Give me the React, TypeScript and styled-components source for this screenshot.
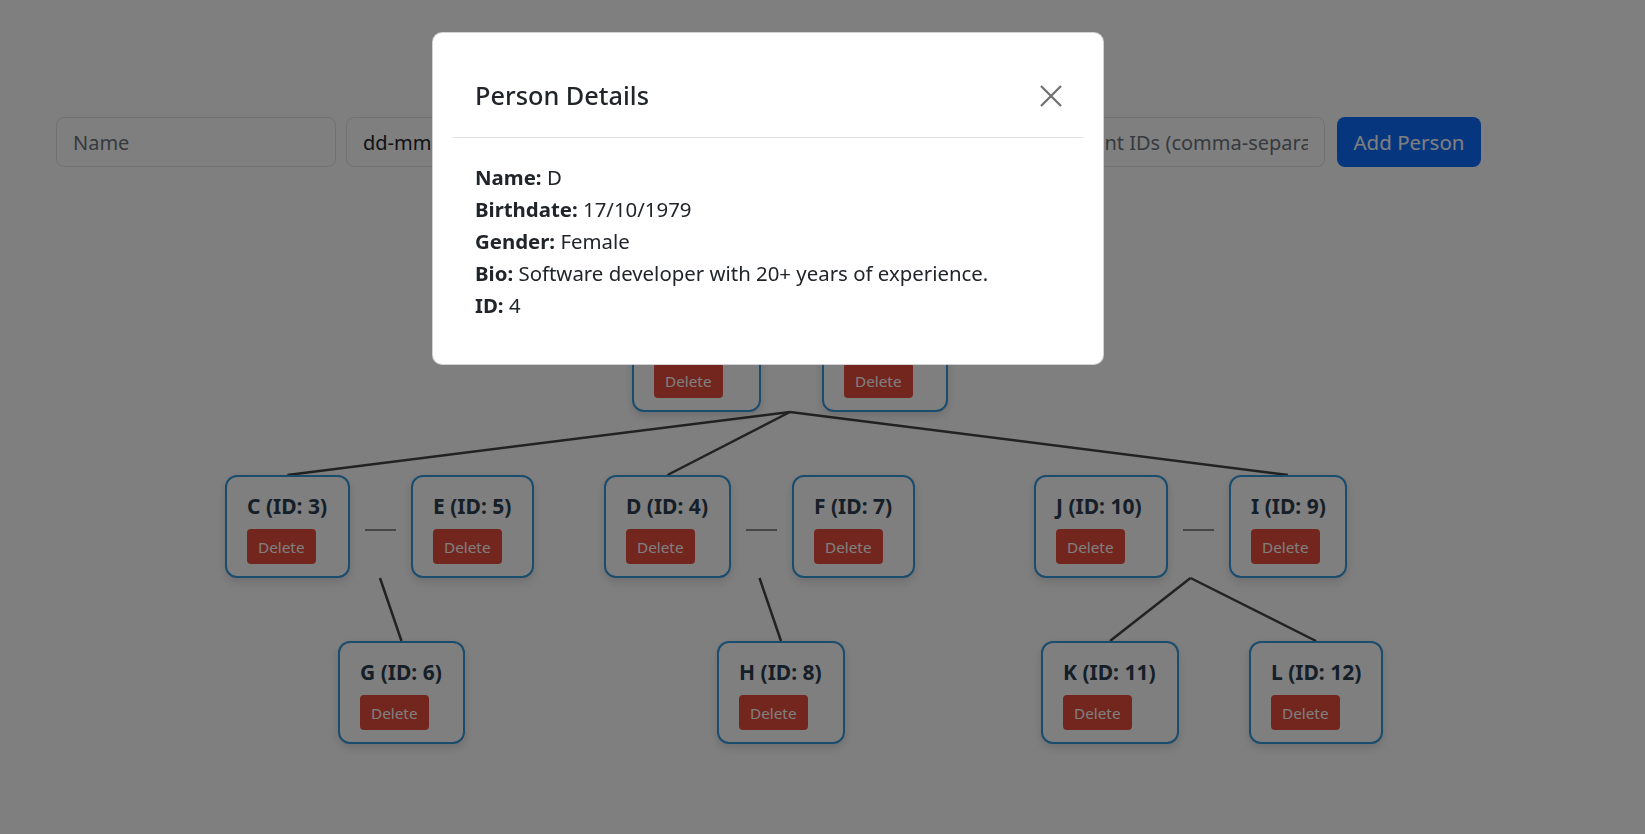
import React from "react";
import styled, { createGlobalStyle } from "styled-components";

const GlobalStyle = createGlobalStyle`
  html, body { margin: 0; padding: 0; background: #ffffff; }
  body { font-family: "Noto Sans", "Open Sans", sans-serif; color: #212529; }
  *, *::before, *::after { box-sizing: border-box; }
`;

const Page = styled.div`
  min-height: 834px;
  padding-top: 117px;
`;

const Form = styled.form`
  display: flex;
  gap: 10px;
  padding-left: 56px;
`;

const Field = styled.input<{ $w: number; $dark?: boolean }>`
  width: ${(p) => p.$w}px;
  height: 50px;
  padding: 0 16px;
  font: 400 20px/1.5 "Noto Sans", sans-serif;
  color: #212529;
  background: #fff;
  border: 1px solid #dee2e6;
  border-radius: 8px;
  outline: none;
  &::placeholder {
    color: ${(p) => (p.$dark ? "#212529" : "#6c757d")};
  }
`;

const Select = styled.select<{ $w: number }>`
  width: ${(p) => p.$w}px;
  height: 50px;
  padding: 0 16px;
  font: 400 20px/1.5 "Noto Sans", sans-serif;
  color: #212529;
  background: #fff;
  border: 1px solid #dee2e6;
  border-radius: 8px;
`;

const AddButton = styled.button`
  width: 144px;
  height: 50px;
  margin-left: 2px;
  font: 400 20.5px/1.5 "Noto Sans", sans-serif;
  color: #fff;
  background: #0d6efd;
  border: none;
  border-radius: 8px;
`;

const Canvas = styled.div`
  position: relative;
  margin-top: 33px;
  height: 600px;
`;

const Lines = styled.svg`
  position: absolute;
  left: 0;
  top: 0;
  width: 100%;
  height: 100%;
  pointer-events: none;
`;

const Group = styled.div`
  position: absolute;
  display: flex;
  align-items: center;
`;

const Card = styled.div`
  height: 103px;
  padding: 17px 0 0 20px;
  background: #fff;
  border: 2px solid #3498db;
  border-radius: 12px;
  box-shadow: 0 4px 10px rgba(0, 0, 0, 0.14);
`;

const CardTitle = styled.div`
  margin-bottom: 11px;
  font: 700 21px/24px "Noto Sans", sans-serif;
  color: #2c3e50;
  white-space: nowrap;
`;

const DeleteButton = styled.button`
  height: 35px;
  padding: 0 11px;
  font: 400 15.3px/24px "Noto Sans", sans-serif;
  color: #fff;
  background: #e74c3c;
  border: none;
  border-radius: 4px;
`;

const SpouseLink = styled.span`
  width: 31px;
  height: 2px;
  margin: 7px 15px 0;
  background: #8c8c8c;
`;

const Overlay = styled.div`
  position: fixed;
  inset: 0;
  background: rgba(0, 0, 0, 0.5);
`;

const Dialog = styled.div`
  width: 672px;
  margin: 32px 0 0 432px;
  padding: 0 20px;
  background: #fff;
  border: 1px solid rgba(0, 0, 0, 0.175);
  border-radius: 10px;
`;

const DialogHeader = styled.div`
  display: flex;
  align-items: center;
  justify-content: space-between;
  padding: 43px 21px 22px 22px;
  border-bottom: 1px solid #dee2e6;
`;

const DialogTitle = styled.h5`
  margin: 0;
  font: 500 25.3px/39px "Noto Sans", sans-serif;
  color: #212529;
`;

const CloseButton = styled.button`
  display: flex;
  padding: 0;
  background: none;
  border: none;
`;

const DialogBody = styled.div`
  padding: 23px 22px 43px;
  font: 400 20.4px/32px "Noto Sans", sans-serif;
  color: #212529;
`;

const Line = styled.div`
  white-space: nowrap;
`;

type Person = { name: string; id: number; w: number };

const NodeCard = ({ p }: { p: Person }) => (
  <Card style={{ width: p.w }}>
    <CardTitle>
      {p.name} (ID: {p.id})
    </CardTitle>
    <DeleteButton>Delete</DeleteButton>
  </Card>
);

const TOP = 200;
const rows = [309 - TOP, 475 - TOP, 641 - TOP];

const couples: { x: number; y: number; a: Person; b: Person }[] = [
  { x: 632, y: rows[0], a: { name: "A", id: 1, w: 129 }, b: { name: "B", id: 2, w: 126 } },
  { x: 225, y: rows[1], a: { name: "C", id: 3, w: 125 }, b: { name: "E", id: 5, w: 123 } },
  { x: 604, y: rows[1], a: { name: "D", id: 4, w: 127 }, b: { name: "F", id: 7, w: 123 } },
  { x: 1034, y: rows[1], a: { name: "J", id: 10, w: 134 }, b: { name: "I", id: 9, w: 118 } },
];

const singles: { x: number; y: number; p: Person }[] = [
  { x: 338, y: rows[2], p: { name: "G", id: 6, w: 127 } },
  { x: 717, y: rows[2], p: { name: "H", id: 8, w: 128 } },
  { x: 1041, y: rows[2], p: { name: "K", id: 11, w: 138 } },
  { x: 1249, y: rows[2], p: { name: "L", id: 12, w: 134 } },
];

const edges: [number, number, number, number][] = [
  [790, 412, 287.5, 475],
  [790, 412, 667.5, 475],
  [790, 412, 1288, 475],
  [380, 578, 401.5, 641],
  [759.5, 578, 781, 641],
  [1190.5, 578, 1110, 641],
  [1190.5, 578, 1316, 641],
];

const CloseIcon = () => (
  <svg width="22" height="22" viewBox="0 0 22 22">
    <path d="M1 1 L21 21 M21 1 L1 21" stroke="#6f6f6f" strokeWidth="2.2" fill="none" />
  </svg>
);

export default function App() {
  return (
    <>
      <GlobalStyle />
      <Page>
        <Form onSubmit={(e) => e.preventDefault()}>
          <Field $w={280} placeholder="Name" />
          <Field $w={280} $dark placeholder="dd-mm-yyyy" />
          <Select $w={150} defaultValue="">
            <option value="">Gender</option>
          </Select>
          <Field $w={239} placeholder="Bio" />
          <Field $w={280} placeholder="Parent IDs (comma-separated)" />
          <AddButton type="submit">Add Person</AddButton>
        </Form>
        <Canvas>
          <Lines>
            {edges.map(([x1, y1, x2, y2], i) => (
              <line key={i} x1={x1} y1={y1 - TOP} x2={x2} y2={y2 - TOP} stroke="#444" strokeWidth="2.5" />
            ))}
          </Lines>
          {couples.map((c) => (
            <Group key={c.a.id} style={{ left: c.x, top: c.y }}>
              <NodeCard p={c.a} />
              <SpouseLink />
              <NodeCard p={c.b} />
            </Group>
          ))}
          {singles.map((s) => (
            <Group key={s.p.id} style={{ left: s.x, top: s.y }}>
              <NodeCard p={s.p} />
            </Group>
          ))}
        </Canvas>
      </Page>
      <Overlay>
        <Dialog>
          <DialogHeader>
            <DialogTitle>Person Details</DialogTitle>
            <CloseButton aria-label="Close">
              <CloseIcon />
            </CloseButton>
          </DialogHeader>
          <DialogBody>
            <Line>
              <strong>Name:</strong> D
            </Line>
            <Line>
              <strong>Birthdate:</strong> 17/10/1979
            </Line>
            <Line>
              <strong>Gender:</strong> Female
            </Line>
            <Line>
              <strong>Bio:</strong> Software developer with 20+ years of experience.
            </Line>
            <Line>
              <strong>ID:</strong> 4
            </Line>
          </DialogBody>
        </Dialog>
      </Overlay>
    </>
  );
}
